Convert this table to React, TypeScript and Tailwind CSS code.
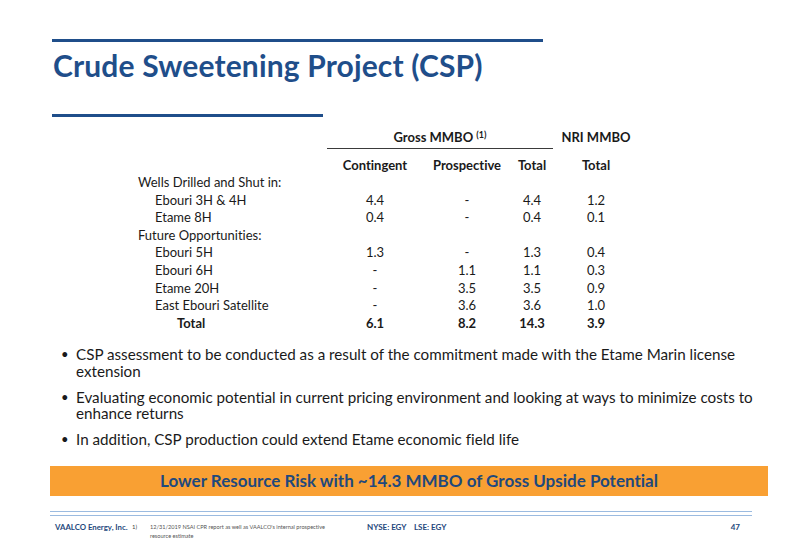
import React from 'react';

const rows: { label: string; indent: number; vals: string[]; bold?: boolean }[] = [
  { label: 'Wells Drilled and Shut in:', indent: 0, vals: [] },
  { label: 'Ebouri 3H & 4H', indent: 1, vals: ['4.4', '-', '4.4', '1.2'] },
  { label: 'Etame 8H', indent: 1, vals: ['0.4', '-', '0.4', '0.1'] },
  { label: 'Future Opportunities:', indent: 0, vals: [] },
  { label: 'Ebouri 5H', indent: 1, vals: ['1.3', '-', '1.3', '0.4'] },
  { label: 'Ebouri 6H', indent: 1, vals: ['-', '1.1', '1.1', '0.3'] },
  { label: 'Etame 20H', indent: 1, vals: ['-', '3.5', '3.5', '0.9'] },
  { label: 'East Ebouri Satellite', indent: 1, vals: ['-', '3.6', '3.6', '1.0'] },
  { label: 'Total', indent: 2, vals: ['6.1', '8.2', '14.3', '3.9'], bold: true },
];

const bullets = [
  'CSP assessment to be conducted as a result of the commitment made with the Etame Marin license extension',
  'Evaluating economic potential in current pricing environment and looking at ways to minimize costs to enhance returns',
  'In addition, CSP production could extend Etame economic field life',
];

export default function App() {
  return (
    <div
      className="w-[800px] h-[554px] bg-white overflow-hidden text-[#1a1a1a] [font-variant-ligatures:none]"
      style={{ fontFamily: 'Lato, "Open Sans", sans-serif' }}
    >
      {/* Title block */}
      <div className="pl-[52px] pt-[39px]">
        <div className="w-[491px] h-[3px] bg-[#1f4e8a]" />
        <h1 className="mt-[5px] text-[30px] leading-[36px] font-bold text-[#1f4e8a] pl-[1px] tracking-[0.15px]">
          Crude Sweetening Project (CSP)
        </h1>
        <div className="mt-[31px] w-[271px] h-[3px] bg-[#1f4e8a]" />
      </div>

      {/* Table */}
      <div className="ml-[138px] mt-[11px] text-[13px]">
        <div className="grid grid-cols-[189px_226px_86px] h-[20px]">
          <div />
          <div className="border-b-[1.5px] border-[#3a3a3a] text-center font-bold leading-[18px]">
            Gross MMBO <span className="text-[9px] relative top-[-4px]">(1)</span>
          </div>
          <div className="text-center font-bold leading-[18px]">NRI MMBO</div>
        </div>
        <div className="grid grid-cols-[189px_96px_88px_42px_86px] h-[26px] pt-[8px] leading-[18px] font-bold">
          <div />
          <div className="text-center">Contingent</div>
          <div className="text-center">Prospective</div>
          <div className="text-center">Total</div>
          <div className="text-center">Total</div>
        </div>
        {rows.map((r) => (
          <div
            key={r.label}
            className={`grid grid-cols-[189px_96px_88px_42px_86px] h-[17.6px] leading-[17.6px] ${r.bold ? 'font-bold' : ''}`}
          >
            <div className={r.indent === 0 ? '' : r.indent === 1 ? 'pl-[17px]' : 'pl-[39px]'}>{r.label}</div>
            {r.vals.map((v, i) => (
              <div key={i} className="text-center">
                {v}
              </div>
            ))}
          </div>
        ))}
      </div>

      {/* Bullets */}
      <ul className="mt-[14px] ml-[61px] w-[712px] text-[15.2px] leading-[16.5px] space-y-[9.5px]">
        {bullets.map((b) => (
          <li key={b} className="flex">
            <span className="w-[15px] shrink-0 text-[13px]">•</span>
            <span>{b}</span>
          </li>
        ))}
      </ul>

      {/* Banner */}
      <div className="mt-[18px] ml-[50px] w-[718px] h-[30px] bg-[#f9a033] flex items-center justify-center">
        <span className="text-[17px] font-bold text-[#1f497d]">
          Lower Resource Risk with ~14.3 MMBO of Gross Upside Potential
        </span>
      </div>

      {/* Footer */}
      <div className="ml-[50px] w-[702px] mt-[15px]">
        <div className="h-[1px] bg-[#9bbbe0]" />
        <div className="h-[1px] bg-[#9bbbe0] mt-[3px]" />
        <div className="flex items-start mt-[6px] pl-[5px]">
          <span className="w-[77px] shrink-0 whitespace-nowrap text-[7.8px] font-bold text-[#1f497d] leading-[10px]">
            VAALCO Energy, Inc.
          </span>
          <span className="w-[18px] shrink-0 text-[6px] leading-[10px] text-[#444]">1)</span>
          <span className="w-[217px] shrink-0 text-[5.6px] leading-[9px] text-[#555]">
            12/31/2019 NSAI CPR report as well as VAALCO's internal prospective
            <br />
            resource estimate
          </span>
          <span className="text-[8px] font-bold text-[#1f497d] leading-[10px] whitespace-pre">NYSE: EGY    LSE: EGY</span>
          <span className="ml-auto mr-[12px] text-[8px] font-bold text-[#1f497d] leading-[10px]">47</span>
        </div>
      </div>
    </div>
  );
}
